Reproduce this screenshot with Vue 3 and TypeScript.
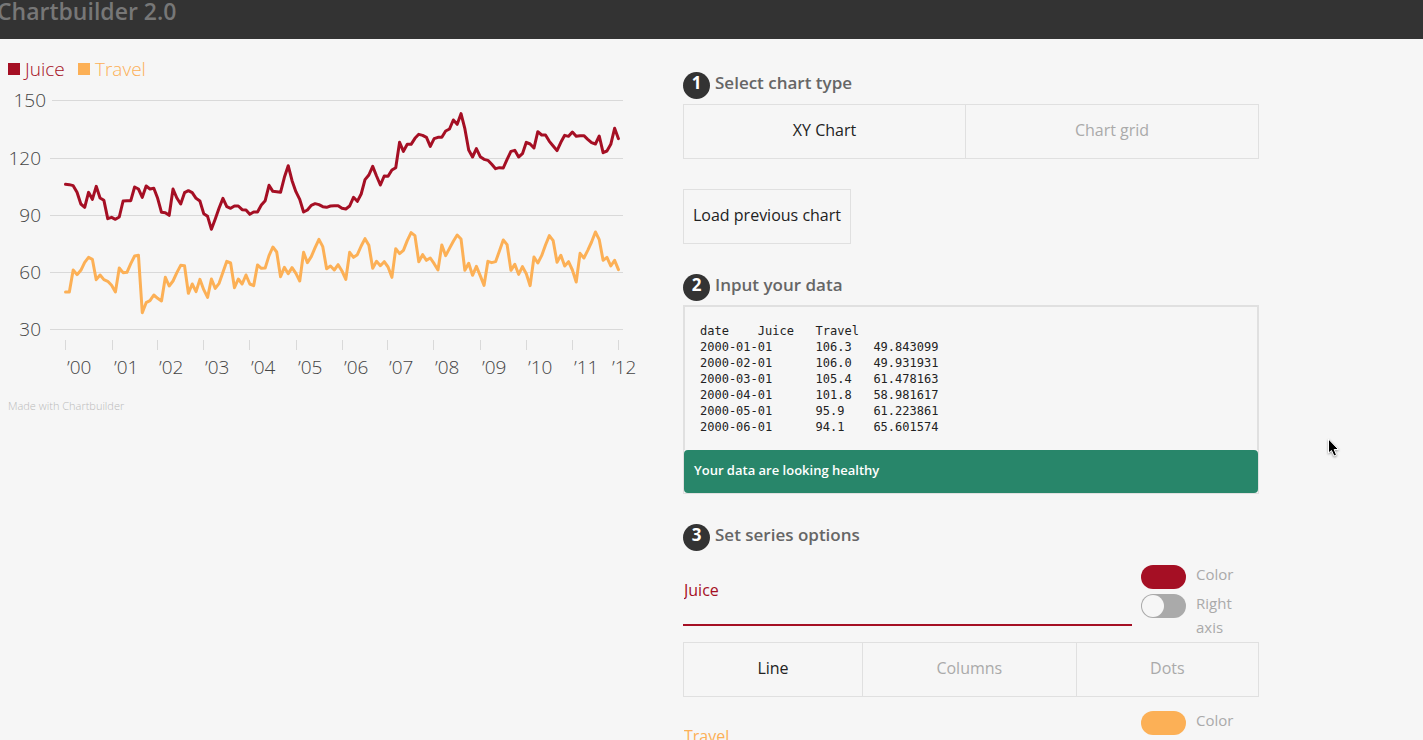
<script setup lang="ts">
import { ref } from 'vue'

interface Series {
  name: string
  color: string
  kind: string
  rightAxis: boolean
  trace: number[]
}

// Traces are sampled monthly, in thirds of a chart unit below y = 51.
const juice = [
  283, 284, 287, 307, 342, 352, 307, 328, 289, 324, 331, 386,
  382, 388, 381, 333, 332, 332, 291, 297, 322, 288, 297, 295,
  325, 367, 368, 376, 297, 324, 342, 308, 302, 308, 325, 333,
  371, 379, 418, 387, 354, 325, 350, 355, 348, 348, 359, 360,
  373, 366, 366, 345, 332, 286, 304, 305, 307, 262, 227, 272,
  305, 328, 366, 360, 346, 341, 344, 350, 352, 348, 347, 347,
  355, 357, 348, 322, 334, 312, 269, 255, 229, 258, 285, 258,
  259, 240, 233, 157, 184, 163, 163, 145, 133, 136, 142, 169,
  146, 142, 142, 123, 117, 90, 103, 71, 116, 180, 201, 176,
  200, 208, 211, 223, 236, 233, 234, 208, 184, 181, 201, 191,
  157, 162, 174, 125, 135, 135, 154, 168, 182, 157, 136, 139,
  126, 139, 137, 137, 148, 158, 162, 138, 188, 183, 163, 115,
  146,
]

const travel = [
  606, 606, 540, 554, 541, 517, 502, 508, 569, 555, 569, 574,
  586, 606, 534, 548, 547, 521, 498, 496, 668, 638, 632, 615,
  625, 633, 562, 588, 573, 548, 526, 527, 610, 582, 605, 568,
  599, 622, 567, 595, 580, 547, 514, 519, 593, 567, 582, 555,
  582, 587, 525, 535, 534, 497, 471, 486, 560, 532, 551, 533,
  550, 573, 487, 518, 500, 473, 448, 470, 536, 528, 540, 524,
  543, 568, 487, 502, 494, 468, 446, 466, 535, 514, 527, 515,
  531, 562, 476, 491, 481, 452, 428, 437, 515, 494, 511, 504,
  521, 540, 465, 497, 475, 454, 435, 447, 541, 520, 556, 529,
  557, 586, 514, 518, 515, 483, 450, 464, 541, 523, 553, 530,
  551, 587, 501, 519, 497, 465, 437, 452, 517, 496, 528, 515,
  540, 576, 490, 504, 481, 456, 426, 449, 511, 502, 528, 511,
  539,
]

const series = ref<Series[]>([
  { name: 'Juice', color: '#a50f24', kind: 'Line', rightAxis: false, trace: juice },
  { name: 'Travel', color: '#fcb056', kind: 'Line', rightAxis: false, trace: travel },
])

const legend = [8, 78]

const chartTypes = ['XY Chart', 'Chart grid']
const chartType = ref('XY Chart')
const kinds = ['Line', 'Columns', 'Dots']

const rows = [
  ['date', 'Juice', 'Travel'],
  ['2000-01-01', '106.3', '49.843099'],
  ['2000-02-01', '106.0', '49.931931'],
  ['2000-03-01', '105.4', '61.478163'],
  ['2000-04-01', '101.8', '58.981617'],
  ['2000-05-01', '95.9', '61.223861'],
  ['2000-06-01', '94.1', '65.601574'],
]
const data = ref(rows.map((r) => r.join('\t')).join('\n'))

const gridLines = [
  { value: 150, y: 61, x: 52, end: 46 },
  { value: 120, y: 119, x: 50, end: 41 },
  { value: 90, y: 176, x: 50, end: 41 },
  { value: 60, y: 233, x: 50, end: 41 },
  { value: 30, y: 290, x: 50, end: 41 },
]

// Labels start just right of their tick; the last one is kept inside the chart.
const years = [65, 112, 157, 203, 249, 296, 342, 387, 433, 480, 526, 572, 618].map((x, i) => ({
  x,
  labelX: Math.min(x + 2, 612),
  label: '’' + String(i).padStart(2, '0'),
}))

const points = (trace: number[]): string =>
  trace.map((v, i) => `${(65.5 + i * 3.84).toFixed(2)},${(51 + v / 3).toFixed(2)}`).join(' ')
</script>

<template>
  <div class="app">
    <header class="topbar">
      <h1>Chartbuilder 2.0</h1>
    </header>
    <main class="layout">
      <section class="preview">
        <svg class="chart" viewBox="0 0 640 384" role="img" aria-label="Juice and Travel by month">
          <g v-for="(s, i) in series" :key="i" class="legend">
            <rect :x="legend[i]" y="24" width="12" height="12" :fill="s.color" />
            <text :x="legend[i] + 17" y="37" :fill="s.color">{{ s.name }}</text>
          </g>
          <g v-for="g in gridLines" :key="g.value">
            <rect class="rule" :x="g.x" :y="g.y" :width="623 - g.x" height="1" />
            <text class="tick end" :x="g.end" :y="g.y + 7">{{ g.value }}</text>
          </g>
          <g v-for="t in years" :key="t.label">
            <rect class="rule" :x="t.x" y="301" width="1" height="10" />
            <text class="tick" :x="t.labelX" y="335">{{ t.label }}</text>
          </g>
          <polyline
            v-for="(s, i) in [...series].reverse()"
            :key="i"
            class="trace"
            :points="points(s.trace)"
            :stroke="s.color"
          />
          <text class="credit" x="8" y="371">Made with Chartbuilder</text>
        </svg>
      </section>

      <section class="editor">
        <div class="step">
          <h2><span class="num">1</span>Select chart type</h2>
          <div class="group">
            <button
              v-for="t in chartTypes"
              :key="t"
              type="button"
              :class="{ active: t === chartType }"
              @click="chartType = t"
            >{{ t }}</button>
          </div>
          <button type="button" class="load">Load previous chart</button>
        </div>

        <div class="step">
          <h2><span class="num">2</span><label for="data">Input your data</label></h2>
          <div class="databox">
            <textarea id="data" v-model="data" spellcheck="false"></textarea>
            <p class="status">Your data are looking healthy</p>
          </div>
        </div>

        <div class="step">
          <h2><span class="num">3</span>Set series options</h2>
          <div v-for="(s, i) in series" :key="i" class="series">
            <div class="fields">
              <input
                v-model="s.name"
                class="name"
                type="text"
                aria-label="Series name"
                :style="{ color: s.color, borderColor: s.color }"
              />
              <div class="options">
                <label class="option">
                  <input v-model="s.color" type="color" class="swatch" />
                  <span>Color</span>
                </label>
                <label class="option">
                  <input v-model="s.rightAxis" type="checkbox" class="toggle" />
                  <span>Right axis</span>
                </label>
              </div>
            </div>
            <div class="group">
              <button
                v-for="k in kinds"
                :key="k"
                type="button"
                :class="{ active: k === s.kind }"
                @click="s.kind = k"
              >{{ k }}</button>
            </div>
          </div>
        </div>
      </section>
    </main>

    <svg class="pointer" width="14" height="22" viewBox="0 0 14 22" aria-hidden="true">
      <path
        d="M1.500 1V15L4.500 12.500L7 18L9.500 17L7.200 11.500H11.500Z"
        fill="#000"
        stroke="#fff"
        stroke-width="1"
      />
    </svg>
  </div>
</template>

<style>
body {
  background: #f6f6f6;
}
</style>

<style scoped>
.app {
  position: relative;
  height: 100vh;
  overflow: hidden;
  background: #f6f6f6;
  font-family: 'Open Sans', 'Noto Sans', sans-serif;
  font-size: 16px;
  color: #222;
}
.app * {
  box-sizing: border-box;
}
.topbar {
  height: 39px;
  background: #333;
}
h1 {
  margin: 0 0 0 -3px;
  font-size: 23px;
  font-weight: 600;
  line-height: 22px;
  color: #777;
}
.layout {
  display: grid;
  grid-template-columns: 10fr 9fr;
  column-gap: 43px;
  padding-right: 164px;
}
.chart {
  display: block;
  width: 100%;
  overflow: visible;
}
.legend text {
  font-size: 19px;
  font-weight: 300;
}
.tick {
  font-size: 19px;
  font-weight: 300;
  fill: #444;
}
.end {
  text-anchor: end;
}
.rule {
  fill: #d9d9d9;
}
.trace {
  fill: none;
  stroke-width: 3;
  stroke-linecap: round;
  stroke-linejoin: round;
}
.credit {
  font-size: 11px;
  font-weight: 300;
  fill: #bbb;
}
.editor {
  min-width: 0;
  padding-top: 33px;
}
.step {
  margin-bottom: 30px;
}
h2 {
  display: flex;
  gap: 5px;
  height: 27px;
  margin: 0;
  font-size: 17px;
  font-weight: 600;
  line-height: 21px;
  color: #666;
}
.num {
  width: 27px;
  height: 27px;
  border-radius: 50%;
  background: #333;
  color: #fff;
  font-weight: 700;
  text-align: center;
}
.group {
  display: flex;
  height: 55px;
  margin-top: 5px;
  border: 1px solid #e0e0e0;
}
button {
  padding: 0 9px 3px;
  border: 0;
  background: none;
  font: inherit;
  color: #222;
  cursor: pointer;
}
.group button {
  flex: 1 1 auto;
  color: #aaa;
}
.group button + button {
  border-left: 1px solid #e0e0e0;
}
.group button.active {
  color: #222;
}
.load {
  height: 55px;
  margin-top: 30px;
  border: 1px solid #e0e0e0;
}
.databox {
  margin-top: 4px;
  border: 1px solid #e0e0e0;
}
textarea {
  display: block;
  width: 100%;
  height: 144px;
  padding: 16px 15px;
  border: 1px solid #e0e0e0;
  border-bottom: 0;
  background: none;
  font: 12px/16px 'DejaVu Sans Mono', monospace;
  color: #222;
  resize: none;
  outline: 0;
  overflow: hidden;
}
.status {
  margin: 0;
  padding: 9px 10px 11px;
  border-radius: 4px;
  background: #28866a;
  color: #fff;
  font-size: 13px;
  font-weight: 600;
  line-height: 23px;
}
.series {
  margin-top: 11px;
}
.fields {
  display: flex;
  gap: 9px;
}
.name {
  flex: 1;
  min-width: 0;
  height: 64px;
  padding: 0 1px 6px;
  border: 0;
  border-bottom: 2px solid;
  background: none;
  font: inherit;
  outline: 0;
}
.options {
  display: flex;
  flex-direction: column;
  gap: 2px;
  width: 118px;
}
.option {
  display: flex;
  gap: 10px;
  padding-right: 20px;
  font-size: 15px;
  line-height: 24px;
  color: #aaa;
}
.swatch,
.toggle {
  flex: none;
  appearance: none;
  width: 45px;
  height: 24px;
  margin: 3px 0 0;
  padding: 0;
  border: 0;
  border-radius: 12px;
  overflow: hidden;
  cursor: pointer;
}
.swatch::-webkit-color-swatch-wrapper {
  padding: 0;
}
.swatch::-webkit-color-swatch {
  border: 0;
}
.toggle {
  padding: 1px;
  background: #aaa;
}
.toggle::before {
  content: '';
  display: block;
  width: 22px;
  height: 22px;
  border-radius: 50%;
  background: #f6f6f6;
}
.toggle:checked::before {
  margin-left: auto;
}
.series .group {
  margin-top: 3px;
}
.pointer {
  position: absolute;
  left: 1327px;
  top: 438px;
  filter: drop-shadow(0 1px 1px rgba(0, 0, 0, 0.4));
}
</style>
